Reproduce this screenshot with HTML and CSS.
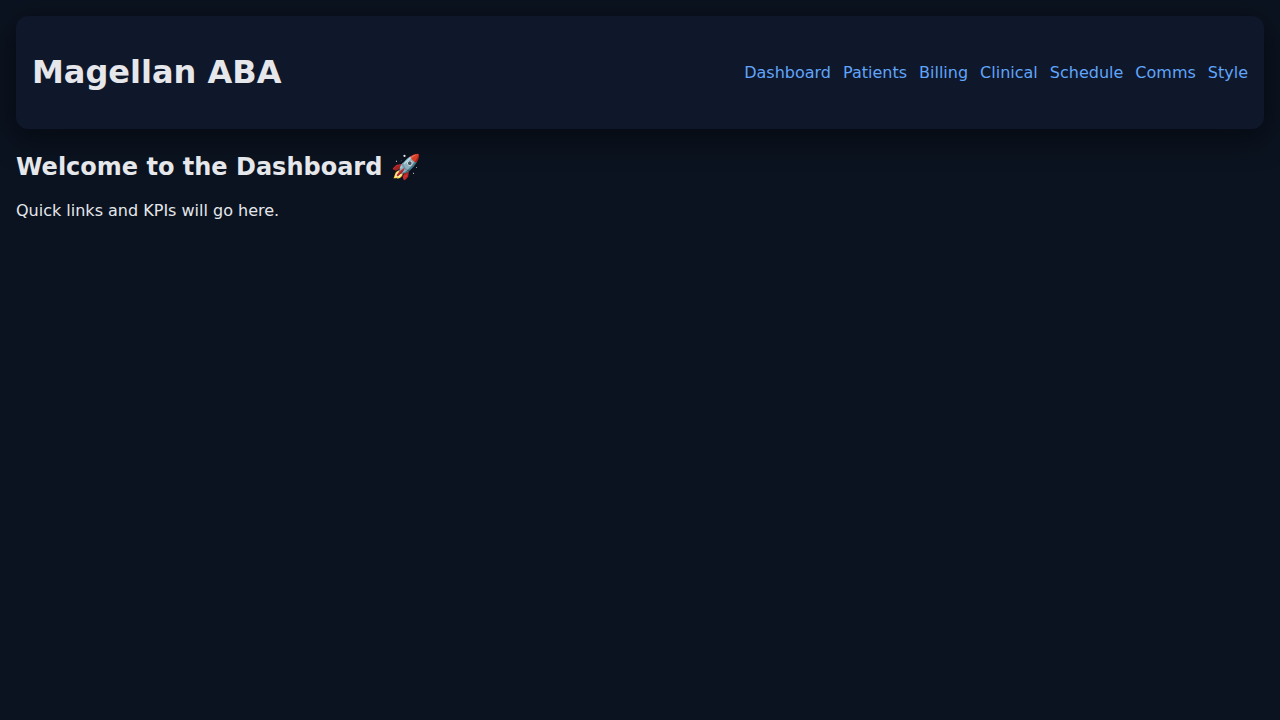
FILE: index.html
```html
<!DOCTYPE html>
<html lang="en">
<head>
<meta charset="utf-8">
<title>Magellan ABA</title>
<link rel="stylesheet" href="styles.css">
</head>
<body>
<header class="header">
  <h1>Magellan ABA</h1>
  <nav class="nav">
    <a href="#">Dashboard</a>
    <a href="#">Patients</a>
    <a href="#">Billing</a>
    <a href="#">Clinical</a>
    <a href="#">Schedule</a>
    <a href="#">Comms</a>
    <a href="#">Style</a>
  </nav>
</header>
<main class="content">
  <h2>Welcome to the Dashboard 🚀</h2>
  <p>Quick links and KPIs will go here.</p>
</main>
</body>
</html>
```

FILE: styles.css
```css
* { box-sizing: border-box; }

body {
  margin: 0;
  padding: 16px;
  background: #0b1320;
  color: #e5e7eb;
  font-family: "DejaVu Sans", sans-serif;
}

.header {
  display: flex;
  align-items: center;
  justify-content: space-between;
  margin-bottom: 24px;
  padding: 16px;
  background: #0f172a;
  border-radius: 12px;
  box-shadow: 0 8px 30px rgba(0, 0, 0, 0.5);
}

.nav {
  display: flex;
  gap: 12px;
}

.nav a {
  color: #60a5fa;
  text-decoration: none;
}
```
